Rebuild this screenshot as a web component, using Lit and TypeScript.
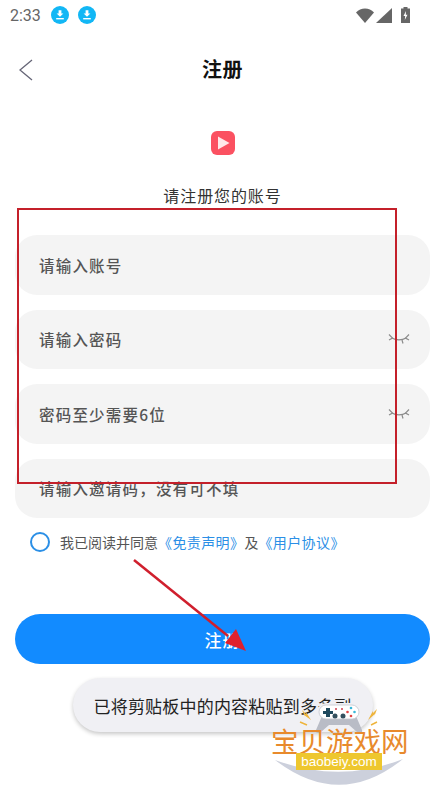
import { LitElement, html, css } from 'lit';
import { customElement } from 'lit/decorators.js';

const downloadIcon = html`<svg class="dl" viewBox="0 0 18 18" width="18" height="18">
  <circle cx="9" cy="9" r="9" fill="#12b7f5"></circle>
  <path d="M7.6 4.2h2.8v3.4h2L9 10.8 5.6 7.6h2z" fill="#fff"></path>
  <rect x="5.2" y="12" width="7.6" height="1.4" fill="#fff"></rect>
</svg>`;

const eyeClosed = html`<svg class="eye" viewBox="0 0 22 12" width="22" height="12" fill="none" stroke="#8c8c8c" stroke-width="1.2">
  <path d="M4 5c4 2.500 10 2.500 14 0"></path>
  <path d="M1 1.500L4.500 5 1 7M21 1.500L17.500 5 21 7M8.500 7l-.5 3.500M14 7l1 3.500"></path>
</svg>`;

@customElement('app-root')
export class AppRoot extends LitElement {
  static styles = css`
    :host {
      display: block;
      position: relative;
      width: 445px;
      height: 791px;
      overflow: hidden;
      background: #fff;
      font-family: "Noto Sans CJK SC", "Liberation Sans", sans-serif;
    }

    .status {
      display: flex;
      align-items: center;
      height: 30px;
      padding: 0 35px 0 10px;
    }
    .time {
      font-family: Roboto, sans-serif;
      font-size: 16px;
      color: #666;
      width: 41px;
    }
    .dl { margin-right: 9px; }
    .status-right {
      margin-left: auto;
      display: flex;
      align-items: center;
      gap: 2px;
    }
    .batt { margin-left: 7px; }

    .nav {
      position: relative;
      display: flex;
      align-items: center;
      justify-content: center;
      height: 50px;
      margin-top: 13px;
    }
    .back {
      position: absolute;
      left: 19px;
      top: 16px;
    }
    .title {
      font-size: 20px;
      font-weight: 700;
      color: #111;
      letter-spacing: 0.6px;
    }

    .logo {
      display: flex;
      justify-content: center;
      margin-top: 38px;
    }
    .sub {
      margin-top: 28px;
      height: 24px;
      line-height: 24px;
      text-align: center;
      font-size: 16px;
      letter-spacing: 0.9px;
      color: #333;
    }

    .fields {
      display: flex;
      flex-direction: column;
      gap: 15px;
      margin: 28px 15px 0;
    }
    .field {
      display: flex;
      align-items: center;
      justify-content: space-between;
      height: 59.5px;
      padding: 0 20px 0 24px;
      border-radius: 22px;
      background: #f4f4f4;
      font-size: 15.5px;
      letter-spacing: 1.2px;
      color: #555;
      font-weight: 500;
    }

    .agree {
      display: flex;
      align-items: center;
      margin: 14px 0 0 30px;
      font-size: 14px;
      color: #555;
    }
    .radio {
      width: 20px;
      height: 20px;
      box-sizing: border-box;
      border: 2px solid #2b8fe6;
      border-radius: 50%;
      margin-right: 10px;
    }
    .link {
      color: #2b8fe6;
      letter-spacing: 0.4px;
    }

    .submit {
      display: flex;
      align-items: center;
      justify-content: center;
      height: 50px;
      margin: 62px 15px 0;
      border-radius: 25px;
      background: #128bff;
      color: #fff;
      font-size: 17px;
      font-weight: 500;
      letter-spacing: 1px;
    }

    .toast-wrap {
      display: flex;
      justify-content: center;
      margin-top: 14px;
    }
    .toast {
      width: 300px;
      height: 54px;
      box-sizing: border-box;
      display: flex;
      align-items: center;
      padding-left: 21px;
      border-radius: 27px;
      background: #f0f0f4;
      box-shadow: 0 2px 4px rgba(0, 0, 0, 0.22);
      font-size: 17px;
      letter-spacing: 0.2px;
      color: #222;
      white-space: nowrap;
      overflow: hidden;
    }

    /* red annotation drawn on top of the screenshot */
    .mark {
      position: absolute;
      left: 17px;
      top: 208px;
      width: 380px;
      height: 276px;
      box-sizing: border-box;
      border: 2px solid #c4202a;
    }
    .arrow {
      position: absolute;
      left: 0;
      top: 0;
      pointer-events: none;
    }

    /* site watermark, bottom right */
    .wm {
      position: absolute;
      left: 260px;
      top: 696px;
      width: 170px;
      height: 95px;
    }
    .wm svg { position: absolute; left: 0; top: 0; }
    .wm-name {
      position: absolute;
      left: 11px;
      top: 31px;
      font-size: 27.5px;
      line-height: 26px;
      color: #e88a2c;
      white-space: nowrap;
    }
    .wm-url {
      position: absolute;
      left: 36px;
      top: 57px;
      width: 86px;
      height: 17px;
      line-height: 17px;
      text-align: center;
      background: #eec72e;
      color: #fff;
      font-family: "Liberation Sans", sans-serif;
      font-size: 13.5px;
    }
  `;

  render() {
    return html`
      <div class="status">
        <span class="time">2:33</span>
        ${downloadIcon}${downloadIcon}
        <div class="status-right">
          <svg viewBox="0 0 18 15" width="18" height="15"><path d="M0 4.500C2.500 2 5.500.5 9 .5s6.500 1.500 9 4L9 15z" fill="#666"></path></svg>
          <svg viewBox="0 0 16 15" width="16" height="15"><path d="M16 0v15H0z" fill="#666"></path></svg>
          <svg class="batt" viewBox="0 0 9 16" width="9" height="16">
            <path d="M2.500 0h4v1.500H9V16H0V1.500h2.500z" fill="#666"></path>
            <path d="M5 4L2.500 9h1.700L3.800 13l2.700-5.200H4.800z" fill="#fff"></path>
          </svg>
        </div>
      </div>

      <div class="nav">
        <svg class="back" viewBox="0 0 14 22" width="14" height="22" fill="none" stroke="#667" stroke-width="1.300">
          <path d="M13 1L1 11l12 10"></path>
        </svg>
        <span class="title">注册</span>
      </div>

      <div class="logo">
        <svg viewBox="0 0 24 24" width="24" height="24">
          <rect width="24" height="24" rx="6" fill="#fb5161"></rect>
          <path d="M7 5.500v13L18.500 12z" fill="#ffe9ea"></path>
        </svg>
      </div>
      <div class="sub">请注册您的账号</div>

      <div class="fields">
        <div class="field">请输入账号</div>
        <div class="field">请输入密码${eyeClosed}</div>
        <div class="field">密码至少需要6位${eyeClosed}</div>
        <div class="field">请输入邀请码，没有可不填</div>
      </div>

      <div class="agree">
        <span class="radio"></span>
        <span>我已阅读并同意</span><span class="link">《免责声明》</span><span>及</span><span class="link">《用户协议》</span>
      </div>

      <div class="submit">注册</div>

      <div class="toast-wrap"><div class="toast">已将剪贴板中的内容粘贴到多多副</div></div>

      <div class="mark"></div>
      <svg class="arrow" width="445" height="791" viewBox="0 0 445 791">
        <path d="M134 560L228 636" stroke="#d01f2d" stroke-width="2.500" fill="none"></path>
        <path d="M246 651L225 643 236 629z" fill="#e0202c"></path>
      </svg>

      <div class="wm">
        <svg width="170" height="95" viewBox="0 0 170 95">
          <path d="M15 64Q80 114 143 63 80 88 15 64z" fill="#ccd0dc"></path>
          <!-- game controller -->
          <rect x="57" y="7" width="44" height="18" rx="9" fill="#f0f0f4"></rect>
          <path d="M62 20h34l6 14c1 3-2 4-5 2l-8-7H69l-8 7c-3 2-6 1-5-2z" fill="#b9bcc6"></path>
          <rect x="59" y="9" width="40" height="14" rx="7" fill="#fff" stroke="#c4c6ce" stroke-width="0.800"></rect>
          <path d="M66 12h4v3h3v3h-3v3h-4v-3h-3v-3h3z" fill="#1f4a5e"></path>
          <circle cx="75" cy="20" r="2.500" fill="#33505e"></circle>
          <circle cx="83" cy="20" r="2.500" fill="#33505e"></circle>
          <circle cx="76" cy="13" r="1" fill="#d04050"></circle>
          <circle cx="82" cy="13" r="1" fill="#d04050"></circle>
          <circle cx="91" cy="12" r="1.300" fill="#39b6d8"></circle>
          <circle cx="87.500" cy="16" r="1.300" fill="#e04444"></circle>
          <circle cx="94.500" cy="16" r="1.300" fill="#39b6d8"></circle>
          <circle cx="91" cy="20" r="1.300" fill="#e04444"></circle>
          <!-- sparks -->
          <path d="M42 14l4 4 0-2 5 8-7-5 1 2z" fill="#eeb43c"></path>
          <path d="M117 13l-4 4 0-2-5 9 7-6-1 3z" fill="#eeb43c"></path>
          <path d="M40 26l7 3M117 26l-6 3" stroke="#eeb43c" stroke-width="1.500"></path>
        </svg>
        <div class="wm-name">宝贝游戏网</div>
        <div class="wm-url">baobeiy.com</div>
      </div>
    `;
  }
}
